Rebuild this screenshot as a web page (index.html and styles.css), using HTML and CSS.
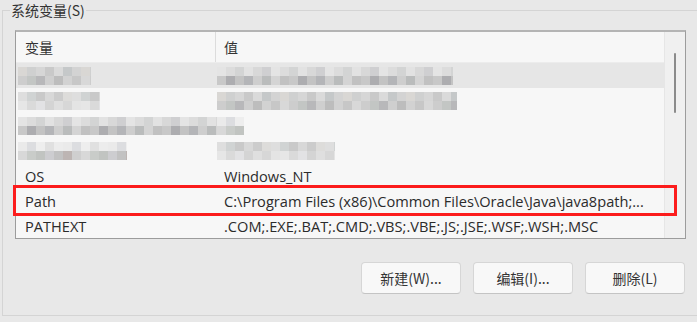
FILE: index.html
```html
<!DOCTYPE html>
<html lang="zh-CN">
<head>
  <meta charset="UTF-8" />
  <title>系统变量</title>
  <link rel="stylesheet" href="styles.css">
</head>
<body>
  <fieldset class="grupo">
    <legend>系统变量(S)</legend>

    <div class="lista">
      <div class="tabela">
        <div class="cabecalho">
          <div class="col-nome">变量</div>
          <div class="col-valor">值</div>
        </div>

        <!-- linhas ocultadas (mosaico) -->
        <div class="linha ativa">
          <div class="col-nome"><span class="mosaico m1" style="width:73px"></span></div>
          <div class="col-valor"><span class="mosaico m2" style="width:236px"></span></div>
        </div>
        <div class="linha">
          <div class="col-nome"><span class="mosaico m3" style="width:82px"></span></div>
          <div class="col-valor"><span class="mosaico m1" style="width:240px"></span></div>
        </div>
        <div class="linha">
          <div class="col-nome"><span class="mosaico m2" style="width:199px"></span></div>
          <div class="col-valor"><span class="mosaico m4" style="width:27px"></span></div>
        </div>
        <div class="linha">
          <div class="col-nome"><span class="mosaico m4" style="width:109px"></span></div>
          <div class="col-valor"><span class="mosaico m3" style="width:118px"></span></div>
        </div>

        <div class="linha">
          <div class="col-nome">OS</div>
          <div class="col-valor">Windows_NT</div>
        </div>
        <div class="linha marcada">
          <div class="col-nome">Path</div>
          <div class="col-valor">C:\Program Files (x86)\Common Files\Oracle\Java\java8path;...</div>
          <div class="destaque"></div>
        </div>
        <div class="linha">
          <div class="col-nome">PATHEXT</div>
          <div class="col-valor">.COM;.EXE;.BAT;.CMD;.VBS;.VBE;.JS;.JSE;.WSF;.WSH;.MSC</div>
        </div>
      </div>

      <div class="rolagem">
        <div class="polegar"></div>
      </div>
    </div>

    <div class="botoes">
      <button class="botao">新建(W)...</button>
      <button class="botao">编辑(I)...</button>
      <button class="botao">删除(L)</button>
    </div>
  </fieldset>
</body>
</html>
```

FILE: styles.css
```css
body {
  margin: 0;
  background: #e8e8e8;
  color: #222;
  font-family: "Open Sans", "Noto Sans CJK SC", sans-serif;
  font-size: 14.6px;
  overflow: hidden;
}

.grupo {
  margin: 1px 0 0 2px;
  padding: 11px 0 21px 12px;
  width: 720px;
  border: 1px solid #d4d4d4;
  border-radius: 0;
  box-sizing: border-box;
}

.grupo legend {
  padding: 0 1px;
  margin-left: -5px;
  color: #333;
  font-family: "Noto Sans CJK SC", sans-serif;
  font-size: 14px;
  line-height: 18px;
}

.lista {
  width: 671px;
  height: 209px;
  box-sizing: border-box;
  border: 1px solid #9c9c9c;
  border-top: 2px solid #b4b4b4;
  background: #f7f7f7;
  display: flex;
}

.tabela {
  flex: 1;
}

.cabecalho {
  display: flex;
  height: 30px;
  align-items: center;
  border-bottom: 1px solid #ececec;
}

.cabecalho .col-nome {
  border-right: 1px solid #dcdcdc;
  height: 100%;
  display: flex;
  align-items: center;
  box-sizing: border-box;
}

.cabecalho div {
  font-family: "Noto Sans CJK SC", sans-serif;
  font-size: 14px;
  color: #333;
}

.col-nome {
  width: 200px;
  padding-left: 9px;
  box-sizing: border-box;
  flex: none;
}

.col-valor {
  padding-left: 8px;
  white-space: nowrap;
}

.linha {
  display: flex;
  align-items: center;
  height: 25px;
  position: relative;
  color: #2b2b2b;
}

.linha.ativa {
  background: #e6e6e6;
}

.destaque {
  position: absolute;
  left: -3px;
  right: -13px;
  top: -3px;
  bottom: -3px;
  border: 3px solid #fc1c1c;
}

.mosaico {
  display: block;
  height: 18px;
  margin-left: -7px;
  background-repeat: no-repeat;
  background-size: 100% 9px;
  background-position: 0 0, 0 9px;
}

.m1 {
  background-image:
    repeating-linear-gradient(90deg, #d9d7d4 0 9px, #cfd0d0 9px 18px, #d6d6d6 18px 27px, #c9c9c9 27px 36px, #dadada 36px 45px, #c5c8c9 45px 54px, #d3d3d3 54px 63px),
    repeating-linear-gradient(90deg, #cdcdcd 0 9px, #c3c6c4 9px 18px, #b8b8ba 18px 27px, #cfcfcf 27px 36px, #bdbdbd 36px 45px, #d2d2d2 45px 54px, #c7c7c7 54px 63px, #d8d8d8 63px 72px);
}

.m2 {
  background-image:
    repeating-linear-gradient(90deg, #e4e4e4 0 9px, #dcdcdc 9px 18px, #d3d4d4 18px 27px, #e2e2e2 27px 36px, #d8d8d8 36px 45px, #cfcfd1 45px 54px),
    repeating-linear-gradient(90deg, #c8c8c8 0 9px, #adadb0 9px 18px, #c3c3c3 18px 27px, #b4b5b8 27px 36px, #cecece 36px 45px, #babcbc 45px 54px, #d4d4d4 54px 63px, #c1c1c1 63px 72px);
}

.m3 {
  background-image:
    repeating-linear-gradient(90deg, #dedede 0 9px, #d0d3d3 9px 18px, #c9c9c9 18px 27px, #d8d8d8 27px 36px, #cccccc 36px 45px, #dddcda 45px 54px),
    repeating-linear-gradient(90deg, #e6e6e6 0 9px, #dadada 9px 18px, #e2e2e4 18px 27px, #d4d4d4 27px 36px, #dfdfdf 36px 45px, #d7d7d7 45px 54px, #e4e4e4 54px 63px);
}

.m4 {
  background-image:
    repeating-linear-gradient(90deg, #eaeaea 0 9px, #dcdde0 9px 18px, #eeeeee 18px 27px, #e0e0e0 27px 36px, #ececec 36px 45px),
    repeating-linear-gradient(90deg, #d8d8d8 0 9px, #c9ccc9 9px 18px, #c1c4c1 18px 27px, #cdcdd0 27px 36px, #c2c2c2 36px 45px, #bdb5b3 45px 54px, #cfcfcf 54px 63px);
}

.rolagem {
  width: 21px;
  flex: none;
  background: #f0f0f0;
  border-left: 1px solid #e6e6e6;
  display: flex;
  justify-content: center;
  padding-top: 21px;
  box-sizing: border-box;
}

.polegar {
  width: 2px;
  height: 60px;
  background: #8b8b8b;
  border-radius: 1px;
}

.botoes {
  display: flex;
  gap: 12px;
  width: 670px;
  justify-content: flex-end;
  margin-top: 23px;
}

.botao {
  width: 100px;
  height: 32px;
  background: #f8f8f8;
  border: 1px solid #d6d6d6;
  border-bottom-color: #c4c4c4;
  border-radius: 4px;
  font-family: "Noto Sans CJK SC", sans-serif;
  font-size: 14px;
  color: #333;
  padding: 0;
}
```
